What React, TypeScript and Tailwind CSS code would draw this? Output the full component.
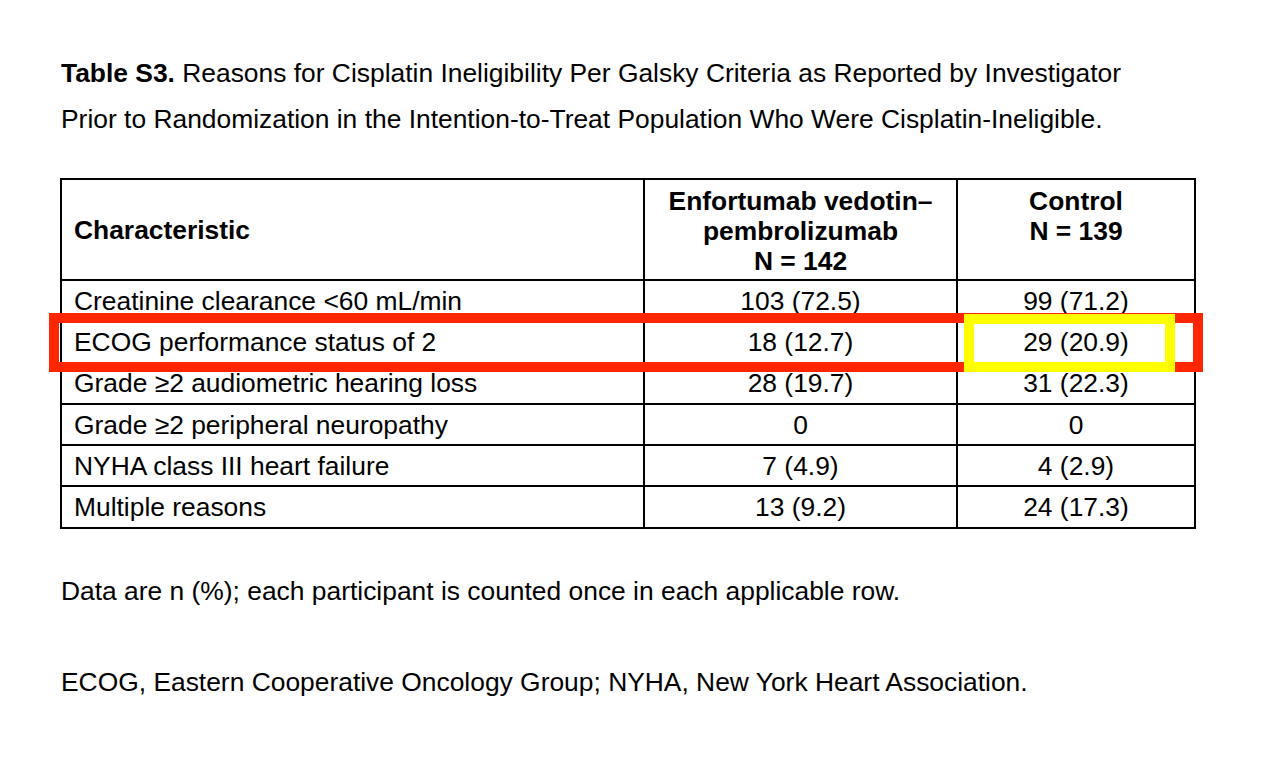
const rows: [string, string, string][] = [
  ["Creatinine clearance <60 mL/min", "103 (72.5)", "99 (71.2)"],
  ["ECOG performance status of 2", "18 (12.7)", "29 (20.9)"],
  ["Grade \u22652 audiometric hearing loss", "28 (19.7)", "31 (22.3)"],
  ["Grade \u22652 peripheral neuropathy", "0", "0"],
  ["NYHA class III heart failure", "7 (4.9)", "4 (2.9)"],
  ["Multiple reasons", "13 (9.2)", "24 (17.3)"],
];

export default function App() {
  return (
    <div className="relative h-[770px] w-[1272px] bg-white text-black font-['Liberation_Sans',Arial,sans-serif] text-[26.4px]">
      <div className="pl-[61px] pt-[50px]">
        <p className="leading-[46px] w-[1190px]">
          <span className="font-bold">Table S3.</span> Reasons for Cisplatin Ineligibility Per Galsky Criteria as Reported by Investigator
          <br />
          Prior to Randomization in the Intention-to-Treat Population Who Were Cisplatin-Ineligible.
        </p>

        <table className="mt-[36px] ml-[-1px] border-collapse border-2 border-black">
          <colgroup>
            <col className="w-[583px]" />
            <col className="w-[313px]" />
            <col className="w-[238px]" />
          </colgroup>
          <thead>
            <tr className="h-[101px]">
              <th className="border-2 border-black px-[12px] text-left align-middle font-bold leading-[30px]">
                Characteristic
              </th>
              <th className="border-2 border-black pt-[6px] text-center align-top font-bold leading-[30px]">
                Enfortumab vedotin–
                <br />
                pembrolizumab
                <br />N = 142
              </th>
              <th className="border-2 border-black pt-[6px] text-center align-top font-bold leading-[30px]">
                Control
                <br />N = 139
              </th>
            </tr>
          </thead>
          <tbody>
            {rows.map(([label, ev, ctrl]) => (
              <tr key={label} className="h-[41.3px]">
                <td className="border-2 border-black px-[12px] leading-[28px]">{label}</td>
                <td className="border-2 border-black text-center leading-[28px]">{ev}</td>
                <td className="border-2 border-black text-center leading-[28px]">{ctrl}</td>
              </tr>
            ))}
          </tbody>
        </table>

        <p className="mt-[47px] leading-[30px]">
          Data are n (%); each participant is counted once in each applicable row.
        </p>
        <p className="mt-[61px] leading-[30px]">
          ECOG, Eastern Cooperative Oncology Group; NYHA, New York Heart Association.
        </p>
      </div>

      {/* highlight boxes drawn over the table */}
      <div className="absolute left-[49px] top-[313px] h-[59px] w-[1154px] border-[10px] border-[#ff2600]" />
      <div className="absolute left-[964px] top-[314px] h-[58px] w-[211px] border-[10px] border-[#ffff00]" />
    </div>
  );
}
